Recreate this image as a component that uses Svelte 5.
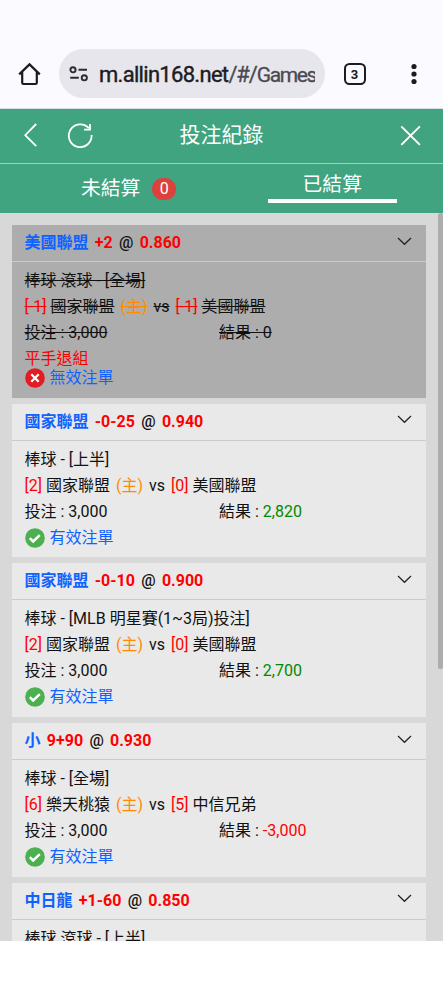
<script>
  const bets = [
    { team: '美國聯盟', line: '+2', odds: '0.860', game: '棒球 滾球 - [全場]', hs: '[-1]', home: '國家聯盟', as: '[-1]', away: '美國聯盟', result: '0', tone: '', voided: true },
    { team: '國家聯盟', line: '-0-25', odds: '0.940', game: '棒球 - [上半]', hs: '[2]', home: '國家聯盟', as: '[0]', away: '美國聯盟', result: '2,820', tone: 'win' },
    { team: '國家聯盟', line: '-0-10', odds: '0.900', game: '棒球 - [MLB 明星賽(1~3局)投注]', hs: '[2]', home: '國家聯盟', as: '[0]', away: '美國聯盟', result: '2,700', tone: 'win' },
    { team: '小', line: '9+90', odds: '0.930', game: '棒球 - [全場]', hs: '[6]', home: '樂天桃猿', as: '[5]', away: '中信兄弟', result: '-3,000', tone: 'red' },
    { team: '中日龍', line: '+1-60', odds: '0.850', game: '棒球 滾球 - [上半]', partial: true }
  ];
</script>

<div class="screen">
  <div class="browser">
    <svg class="home" width="24" height="24" viewBox="0 0 24 24" fill="none" stroke="#1c1b20" stroke-width="2.2"><path d="M1.2 12.4 11.5 2.4l10.3 10M4.2 10v10.7q0 1.3 1.3 1.3h12q1.3 0 1.3-1.3V10" stroke-linejoin="miter"/></svg>
    <div class="pill">
      <svg width="20" height="18" viewBox="0 0 20 18" fill="none" stroke="#2c2b31" stroke-width="1.9"><circle cx="4" cy="4.8" r="2.6"/><path d="M9.5 4.8H18M1.2 12.8H9.8"/><circle cx="15.3" cy="12.8" r="2.6"/></svg>
      <div class="url"><span class="host">m.allin168.net</span><span class="path">/#/</span><span class="path tight">Games</span></div>
    </div>
    <div class="count">3</div>
    <svg class="dots" width="8" height="24" viewBox="0 0 8 24" fill="#1c1b20"><circle cx="4" cy="4.5" r="2.6"/><circle cx="4" cy="12" r="2.6"/><circle cx="4" cy="19.5" r="2.6"/></svg>
  </div>

  <header>
    <div class="left">
      <svg width="14" height="26" viewBox="0 0 14 26" fill="none" stroke="#fff" stroke-width="1.8"><path d="M12.2 2 1.2 13.2l11 11"/></svg>
      <svg class="reload" width="26" height="26" viewBox="0 0 26 26" fill="none" stroke="#fff" stroke-width="1.8"><path d="M24.6 13A11.4 11.4 0 1 1 21.8 6.2M23 2V7.6H17"/></svg>
    </div>
    <h1>投注紀錄</h1>
    <svg class="close" width="21" height="21" viewBox="0 0 21 21" fill="none" stroke="#fff" stroke-width="1.9"><path d="m1.3 1.3 18.6 18.6M19.9 1.3 1.3 19.9"/></svg>
  </header>

  <nav>
    <div class="tab open">未結算<span class="badge">0</span></div>
    <div class="tab settled"><span>已結算</span></div>
  </nav>

  <main>
    <div class="list">
      {#each bets as b}
        <article class:voided={b.voided}>
          <div class="head">
            <b class="blue">{b.team}</b><b class="red">{b.line}</b><b class="at">@</b><b class="red">{b.odds}</b>
            <svg class="chev" width="15" height="9" viewBox="0 0 15 9" fill="none" stroke="#222" stroke-width="1.2"><path d="m1 1 6.5 6.3L14 1"/></svg>
          </div>
          <div class="body">
            <div class="row"><span class="txt">{b.game}</span></div>
            {#if !b.partial}
              <div class="row">
                <span class="txt red">{b.hs}</span><span class="txt team">{b.home}</span><span class="txt host-mark">(主)</span><span class="txt vs">vs</span><span class="txt red">{b.as}</span><span class="txt team">{b.away}</span>
              </div>
              <div class="row half"><div><span class="txt">投注 : 3,000</span></div><div><span class="txt">結果 : <span class={b.tone}>{b.result}</span></span></div></div>
              {#if b.voided}<div class="row note red">平手退組</div>{/if}
              <div class="row status">
                {#if b.voided}
                  <svg width="20" height="20" viewBox="0 0 20 20"><circle cx="10" cy="10" r="9.8" fill="#e31b23"/><path d="m6.3 6.3 7.4 7.4m0-7.4-7.4 7.4" stroke="#fff" stroke-width="2.3"/></svg>
                {:else}
                  <svg width="20" height="20" viewBox="0 0 20 20"><circle cx="10" cy="10" r="9.8" fill="#4caf50"/><path d="m4.8 10.2 3.3 3.3 6.7-6.4" fill="none" stroke="#fff" stroke-width="2.5"/></svg>
                {/if}
                <span>{b.voided ? '無效注單' : '有效注單'}</span>
              </div>
            {/if}
          </div>
        </article>
      {/each}
    </div>
    <div class="scroll"></div>
  </main>
</div>

<style>
  :global(body) { background: #fff; }
  .screen { width: 443px; height: 1000px; overflow: hidden; background: #fff; font: 16px/26px Roboto, "Noto Sans CJK TC", sans-serif; color: #111; }
  svg { display: block; flex: none; }
  .browser { height: 109px; box-sizing: border-box; padding: 39px 0 0 18px; display: flex; align-items: center; background: #fbfaff; border-bottom: 1px solid #dcdfe3; }
  .pill { width: 266px; height: 49px; box-sizing: border-box; margin-left: 17px; padding: 0 10px; border-radius: 25px; background: #e7e6ec; display: flex; align-items: center; }
  .url { flex: 1; margin-left: 10px; padding-top: 2px; overflow: hidden; white-space: nowrap; font-size: 22px; line-height: 32px; }
  .host { color: #1d1c22; -webkit-text-stroke: 0.4px; letter-spacing: -0.7px; }
  .path { color: #4b4a50; -webkit-text-stroke: 0.3px; letter-spacing: -1.1px; }
  .tight { font-size: 21px; letter-spacing: -1.4px; }
  .count { width: 22px; height: 22px; box-sizing: border-box; margin-left: 18.5px; border: 2px solid #1c1b20; border-radius: 5.5px; font-size: 13px; font-weight: 700; line-height: 19px; text-align: center; color: #1c1b20; }
  .dots { margin-left: 44px; }
  header { height: 55px; box-sizing: border-box; padding: 0 22px 2px; display: grid; grid-template-columns: 1fr auto 1fr; align-items: center; background: #40a480; border-bottom: 1px solid #a9cdbf; }
  .left { display: flex; align-items: center; }
  .left svg:first-child { margin-left: 2px; }
  .reload { margin-left: 29px; }
  h1 { margin: 0; font-size: 21px; line-height: 30px; font-weight: 400; color: #fff; }
  .close { justify-self: end; }
  nav { height: 49px; background: #40a480; display: grid; grid-template-columns: 1fr 1fr; color: #fff; font-size: 19.8px; line-height: 28px; }
  .tab { display: flex; justify-content: center; }
  .open { align-items: center; justify-content: flex-start; padding: 0 0 0 81px; }
  .badge { width: 24px; height: 22px; margin-left: 12px; border-radius: 12px; background: #dd413c; font-size: 16px; line-height: 22px; text-align: center; }
  .settled span { width: 129px; height: 39px; box-sizing: border-box; border-bottom: 4px solid #fff; padding-top: 7px; text-align: center; }
  main { height: 728px; overflow: hidden; background: #d8d8d8; display: flex; }
  .list { width: 414px; margin: 12px 12px 0; flex: none; }
  .scroll { width: 5px; height: 456px; background: #adadad; border-radius: 3px 3px 2px 2px; }
  article { height: 153.8px; margin-bottom: 6px; background: #e9e9e9; box-sizing: border-box; white-space: nowrap; }
  .voided { height: 172.5px; background: #adadad; }
  .head { height: 37px; box-sizing: border-box; padding: 0 13px 0 12.5px; display: flex; align-items: center; gap: 6.3px; border-bottom: 1px solid #cbcbcb; }
  .at { font-weight: 500; }
  .chev { margin: -4px 1px 0 auto; }
  .body { padding: 6px 13px 0 12.5px; }
  .row { display: flex; height: 26px; }
  .voided .txt { text-decoration: line-through; }
  .team { margin-left: 4px; }
  .host-mark { margin: 0 6px; color: #ff8c00; }
  .vs { margin-right: 6px; }
  .half { display: grid; grid-template-columns: 194.5px 1fr; }
  .blue { color: #0f62fe; }
  .red { color: #f00; }
  .win { color: #008a00; }
  .note { height: 23px; line-height: 26px; }
  .status { align-items: center; gap: 5px; color: #0f62fe; }
  .voided .status { height: 17px; }
</style>
